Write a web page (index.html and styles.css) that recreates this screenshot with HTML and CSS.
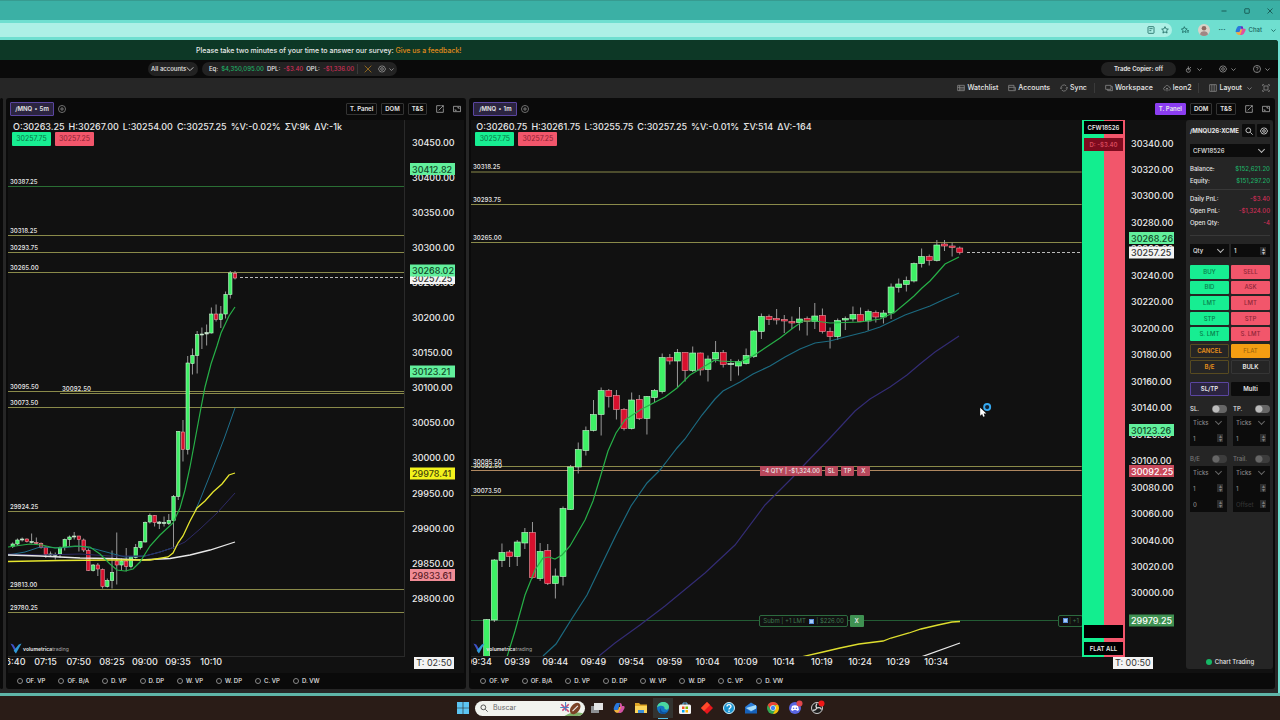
FILE: index.html
```html
<!DOCTYPE html>
<html lang="en">
<head>
    <meta charset="utf-8">
    <title>Volumetrica Trading</title>
    <link rel="stylesheet" href="styles.css">
</head>
<body>
    <!-- Shared icons -->
    <svg class="icon-defs" width="0" height="0" aria-hidden="true">
        <symbol id="i-chevron" viewBox="0 0 12 12"><path d="M1 3.5l5 5 5-5"/></symbol>
        <symbol id="i-gear" viewBox="0 0 12 12"><path d="M6 .8l1.2 1.4 1.9-.3.5 1.8 1.6 1L10.5 6l.7 1.3-1.6 1-.5 1.8-1.9-.3L6 11.2 4.800 9.800l-1.9.3-.5-1.8-1.6-1L1.5 6 .8 4.700l1.6-1 .5-1.8 1.9.3z"/><circle cx="6" cy="6" r="2"/></symbol>
        <symbol id="i-plus" viewBox="0 0 12 12"><circle cx="6" cy="6" r="5.3"/><path d="M6 3v6M3 6h6"/></symbol>
        <symbol id="i-popout" viewBox="0 0 12 12"><path d="M7 1H1v10h10V5M4 8l7-7M8 1h3v3"/></symbol>
        <symbol id="i-frame" viewBox="0 0 12 12"><path d="M.7 2h10.600v8H.7zM6.500 4H9v2M3 6.500V8h2.500"/></symbol>
        <symbol id="i-search" viewBox="0 0 12 12"><circle cx="5" cy="5" r="3.6"/><path d="M8 8l3.5 3.5"/></symbol>
        <symbol id="i-volumetrica" viewBox="0 0 12 12"><path d="M0 .5l3 1 3 5v5z" fill="#3f51c8"/><path d="M12 .5l-3 1-5.500 7L6 11.500z" fill="#2f9ad6"/></symbol>
    </svg>

    <div class="window">
        <div class="titlebar">
            <button aria-label="Minimize"><svg viewBox="0 0 12 12"><path d="M1 6h10"/></svg></button>
            <button aria-label="Maximize"><svg viewBox="0 0 12 12"><rect x="1.5" y="1.5" width="9" height="9" rx="1"/></svg></button>
            <button aria-label="Close"><svg viewBox="0 0 12 12"><path d="M1 1l10 10M11 1L1 11"/></svg></button>
        </div>

        <div class="browser-bar">
            <div class="address">
                <svg class="icon" viewBox="0 0 12 12"><rect x="1.5" y="1" width="9" height="10" rx="1"/><path d="M3.5 4h5M3.5 7h3"/></svg>
                <svg class="icon" viewBox="0 0 12 12"><path d="M6 1l1.5 3.3 3.5.4-2.6 2.4.7 3.5L6 8.900l-3.1 1.7.7-3.5L1 4.700l3.500-.4z"/></svg>
            </div>
            <svg class="icon" viewBox="0 0 12 12"><path d="M5 1l1.300 3 3 .4-2.300 2.200.6 3.200L5 8.300l-2.700 1.500.5-3.200L.6 4.400l3.100-.4zM9 7h3M9 9h3"/></svg>
            <svg class="avatar" viewBox="0 0 12 12"><circle cx="6" cy="6" r="6" fill="#d9d2c8"/><circle cx="6" cy="4.3" r="2.3" fill="#8b6a62"/><path d="M2 10.500c0-4.500 8-4.500 8 0q-4 3-8 0" fill="#a08684"/></svg>
            <span class="dots">···</span>
            <button class="copilot">
                <svg viewBox="0 0 12 12"><path d="M4 1h3l-2 7H1Q0 7 2 3 3 1 4 1" fill="#2878dc"/><path d="M7 1q2 0 2 3h2q1.500 1-.5 4-1 3-3 3H5l2-6z" fill="#e04fa0"/><path d="M1 8h4l1-3h2L6 10q-1 1-2 1Q2 11 1 8" fill="#f5a83c"/><path d="M7 1q2 0 2 3H6z" fill="#5636c9"/></svg>
                Chat
            </button>
            <svg class="icon small" viewBox="0 0 12 12"><use href="#i-chevron"/></svg>
        </div>

        <div class="app">
            <div class="survey">Please take two minutes of your time to answer our survey: <a href="#">Give us a feedback!</a></div>

            <div class="topbar">
                <button class="pill accounts">All accounts <svg class="icon"><use href="#i-chevron"/></svg></button>
                <div class="pill equity">
                    <span>Eq:</span><span class="up">$4,350,095.00</span>
                    <span>DPL:</span><span class="down">-$3.40</span>
                    <span>OPL:</span><span class="down">-$1,336.00</span>
                    <i class="sep"></i>
                    <svg class="icon gold" viewBox="0 0 12 12"><path d="M1 1l10 10M11 1L1 11"/></svg>
                    <svg class="icon"><use href="#i-gear"/></svg>
                    <svg class="icon small"><use href="#i-chevron"/></svg>
                </div>
                <div class="topbar-right">
                    <button class="pill copier">Trade Copier: off</button>
                    <button class="icon-pair" aria-label="Connection"><svg class="icon" viewBox="0 0 12 12"><circle cx="5" cy="8" r="3"/><path d="M5 8V2M7 5l2-2"/></svg><svg class="icon small"><use href="#i-chevron"/></svg></button>
                    <button class="icon-pair" aria-label="Settings"><svg class="icon"><use href="#i-gear"/></svg><svg class="icon small"><use href="#i-chevron"/></svg></button>
                    <button class="icon-pair" aria-label="Help"><svg class="icon" viewBox="0 0 12 12"><circle cx="6" cy="6" r="5.3"/><path d="M4.500 4.700c0-2 3.200-2 3.200 0C7.700 6 6 6 6 7.300M6 8.500v1"/></svg><svg class="icon small"><use href="#i-chevron"/></svg></button>
                </div>
            </div>

            <nav class="toolbar">
                <a href="#"><svg class="icon" viewBox="0 0 12 12"><path d="M1 2h10v8H1zM1 5h10M4 2v8M4 7.500h7"/></svg>Watchlist</a>
                <a href="#"><svg class="icon" viewBox="0 0 12 12"><path d="M1 2h8v3M1 2v8h10V5H1M8 7.500h3"/></svg>Accounts</a>
                <a href="#"><svg class="icon" viewBox="0 0 12 12"><path d="M1.500 7a4.600 4.600 0 0 1 8-4M10.500 5a4.600 4.600 0 0 1-8 4M0 5.500L1.500 7 3 5.500M9 6.500L10.500 5 12 6.500"/></svg>Sync</a>
                <i class="sep"></i>
                <a href="#"><svg class="icon" viewBox="0 0 12 12"><path d="M1 2h8v6H1zM9 4h2.500v6H4V8"/></svg>Workspace</a>
                <a href="#"><svg class="icon" viewBox="0 0 12 12"><path d="M4 9H2.500C0 8.500.5 5 3 5c.5-4 6-3.500 6.200 0 3 .2 2.800 4 0 4H8M6 11V6M4.500 7.500L6 6l1.500 1.500"/></svg>leon2</a>
                <i class="sep"></i>
                <a href="#"><svg class="icon" viewBox="0 0 12 12"><path d="M1 1h10v10H1zM4.300 1v10M7.700 1v10"/></svg>Layout<svg class="icon small"><use href="#i-chevron"/></svg></a>
                <a href="#" aria-label="Fullscreen"><svg class="icon" viewBox="0 0 12 12"><path d="M3 3h6v6H3zM1 3V1h2M9 1h2v2M11 9v2H9M3 11H1V9"/></svg></a>
            </nav>

            <main class="panels">
                <div class="panel-sliver"></div>

                <section class="panel">
                    <header class="panel-head">
                        <button class="tab">/MNQ <b>•</b> 5m</button>
                        <button class="bare" aria-label="Add chart"><svg class="icon"><use href="#i-plus"/></svg></button>
                        <div class="panel-tools">
                            <button>T. Panel</button><button>DOM</button><button>T&amp;S</button>
                            <svg class="icon"><use href="#i-popout"/></svg>
                            <svg class="icon"><use href="#i-frame"/></svg>
                        </div>
                    </header>
                    <div class="panel-body">
                        <div class="chart">
                            <div class="plot" id="plot-5m">
                                <div class="ohlc"><span>O:30263.25</span><span>H:30267.00</span><span>L:30254.00</span><span>C:30257.25</span><span>%V:-0.02%</span><span>ΣV:9k</span><span>ΔV:-1k</span></div>
                                <div class="quotes"><button class="bid">30257.75</button><button class="ask">30257.25</button></div>
                                <div class="brand"><svg><use href="#i-volumetrica"/></svg><span><b>volumetrica</b>trading</span></div>
                            </div>
                            <div class="price-axis" id="price-5m"></div>
                            <div class="time-axis" id="time-5m"></div>
                            <div class="countdown"><span>T: 02:50</span></div>
                        </div>
                    </div>
                    <footer class="studies">
                        <label><input type="radio">OF. VP</label>
                        <label><input type="radio">OF. B/A</label>
                        <label><input type="radio">D. VP</label>
                        <label><input type="radio">D. DP</label>
                        <label><input type="radio">W. VP</label>
                        <label><input type="radio">W. DP</label>
                        <label><input type="radio">C. VP</label>
                        <label><input type="radio">D. VW</label>
                    </footer>
                </section>

                <section class="panel">
                    <header class="panel-head">
                        <button class="tab">/MNQ <b>•</b> 1m</button>
                        <button class="bare" aria-label="Add chart"><svg class="icon"><use href="#i-plus"/></svg></button>
                        <div class="panel-tools">
                            <button class="on">T. Panel</button><button>DOM</button><button>T&amp;S</button>
                            <svg class="icon"><use href="#i-popout"/></svg>
                            <svg class="icon"><use href="#i-frame"/></svg>
                        </div>
                    </header>
                    <div class="panel-body">
                        <div class="chart with-account">
                            <div class="plot" id="plot-1m">
                                <div class="ohlc"><span>O:30260.75</span><span>H:30261.75</span><span>L:30255.75</span><span>C:30257.25</span><span>%V:-0.01%</span><span>ΣV:514</span><span>ΔV:-164</span></div>
                                <div class="quotes"><button class="bid">30257.75</button><button class="ask">30257.25</button></div>
                                <div class="brand"><svg><use href="#i-volumetrica"/></svg><span><b>volumetrica</b>trading</span></div>
                                <div class="position">
                                    <span>-4 QTY | -$1,324.00</span><button>SL</button><button>TP</button><button>X</button>
                                </div>
                                <div class="order">
                                    <span>Subm | +1 LMT <i></i> | $226.00</span><button>X</button>
                                </div>
                                <div class="order-edge"><i></i> | +1</div>
                                <svg class="cursor" viewBox="0 0 12 12"><circle cx="7" cy="3.5" r="2.600" fill="#123" stroke="#36a9f0" stroke-width="1.6"/><path d="M1 4v7l1.700-1.500.9 2.300 1.300-.5L4 9h2.300z" fill="#fff"/></svg>
                            </div>
                            <div class="account-bar">
                                <span class="acct">CFW18526</span>
                                <span class="acct loss">D: -$3.40</span>
                                <span class="acct blank"></span>
                                <button class="acct">FLAT ALL</button>
                            </div>
                            <div class="price-axis" id="price-1m"></div>
                            <div class="time-axis" id="time-1m"></div>
                            <div class="countdown"><span>T: 00:50</span></div>
                        </div>

                        <aside class="ticket">
                            <div class="ticket-title">
                                <strong>/MNQU26:XCME</strong>
                                <button aria-label="Search"><svg class="icon"><use href="#i-search"/></svg></button>
                                <button aria-label="Settings"><svg class="icon"><use href="#i-gear"/></svg></button>
                            </div>
                            <div class="select"><select aria-label="Account"><option>CFW18526</option></select></div>
                            <dl class="totals">
                                <div><dt>Balance:</dt><dd class="up">$152,621.20</dd></div>
                                <div><dt>Equity:</dt><dd class="up">$151,297.20</dd></div>
                            </dl>
                            <dl class="totals">
                                <div><dt>Daily PnL:</dt><dd class="down">-$3.40</dd></div>
                                <div><dt>Open PnL:</dt><dd class="down">-$1,324.00</dd></div>
                                <div><dt>Open Qty:</dt><dd class="down">-4</dd></div>
                            </dl>
                            <div class="pair qty">
                                <div class="select"><select aria-label="Size type"><option>Qty</option></select></div>
                                <div class="stepper"><input type="text" aria-label="Quantity" value="1"></div>
                            </div>
                            <div class="pair orders">
                                <button class="buy">BUY</button><button class="sell">SELL</button>
                                <button class="buy">BID</button><button class="sell">ASK</button>
                                <button class="buy">LMT</button><button class="sell">LMT</button>
                                <button class="buy">STP</button><button class="sell">STP</button>
                                <button class="buy">S. LMT</button><button class="sell">S. LMT</button>
                            </div>
                            <div class="pair manage">
                                <button class="outline">CANCEL</button><button class="flat">FLAT</button>
                                <button class="outline">B/E</button><button>BULK</button>
                            </div>
                            <div class="pair modes">
                                <button class="on">SL/TP</button><button>Multi</button>
                            </div>
                            <div class="pair brackets">
                                <div class="bracket">
                                    <label>SL. <input type="checkbox"></label>
                                    <div class="fields">
                                        <div class="select"><select aria-label="SL unit"><option>Ticks</option></select></div>
                                        <div class="stepper"><input type="text" aria-label="SL ticks" value="1"></div>
                                    </div>
                                </div>
                                <div class="bracket">
                                    <label>TP. <input type="checkbox"></label>
                                    <div class="fields">
                                        <div class="select"><select aria-label="TP unit"><option>Ticks</option></select></div>
                                        <div class="stepper"><input type="text" aria-label="TP ticks" value="1"></div>
                                    </div>
                                </div>
                                <div class="bracket off">
                                    <label>B/E <input type="checkbox"></label>
                                    <div class="fields">
                                        <div class="select"><select aria-label="B/E unit"><option>Ticks</option></select></div>
                                        <div class="stepper"><input type="text" aria-label="B/E ticks" value="1"></div>
                                        <div class="stepper"><input type="text" aria-label="B/E offset" value="0"></div>
                                    </div>
                                </div>
                                <div class="bracket off">
                                    <label>Trail. <input type="checkbox"></label>
                                    <div class="fields">
                                        <div class="select"><select aria-label="Trail unit"><option>Ticks</option></select></div>
                                        <div class="stepper"><input type="text" aria-label="Trail ticks" value="1"></div>
                                        <div class="stepper"><input type="text" aria-label="Trail offset" placeholder="Offset"></div>
                                    </div>
                                </div>
                            </div>
                            <div class="status"><i></i>Chart Trading</div>
                        </aside>
                    </div>
                    <footer class="studies">
                        <label><input type="radio">OF. VP</label>
                        <label><input type="radio">OF. B/A</label>
                        <label><input type="radio">D. VP</label>
                        <label><input type="radio">D. DP</label>
                        <label><input type="radio">W. VP</label>
                        <label><input type="radio">W. DP</label>
                        <label><input type="radio">C. VP</label>
                        <label><input type="radio">D. VW</label>
                    </footer>
                </section>
            </main>
        </div>
    </div>

    <div class="taskbar">
        <svg viewBox="0 0 12 12"><path d="M0 0h5.700v5.700H0zM6.300 0H12v5.700H6.300zM0 6.300h5.700V12H0zM6.300 6.300H12V12H6.300z" fill="#5cc4f2"/></svg>
        <label class="search">
            <svg class="icon"><use href="#i-search"/></svg>
            <input type="text" placeholder="Buscar">
            <svg class="doodle" viewBox="0 0 24 14"><path d="M5 14q8-6 19-2v2z" fill="#7fb069"/><path d="M2 3l7 7M9 3L3 9" stroke="#c44a78" stroke-width="1.5"/><path d="M6 1v8M1 6h8" stroke="#4a80c8"/><ellipse cx="15" cy="7" rx="6" ry="4" transform="rotate(-50 15 7)" fill="#7b4326"/><path d="M12.500 9.500l5-5" stroke="#eee"/></svg>
        </label>
        <svg viewBox="0 0 12 12"><rect y="4" width="8" height="7" fill="#8d8f92"/><rect x="3" y="1" width="9" height="7" fill="#e4e4e4"/></svg>
        <svg viewBox="0 0 12 12"><path d="M4 1h3l-2 7H1Q0 7 2 3 3 1 4 1" fill="#2878dc"/><path d="M7 1q2 0 2 3h2q1.500 1-.5 4-1 3-3 3H5l2-6z" fill="#d453a4"/><path d="M1 8h4l1-3h2L6 10q-1 1-2 1Q2 11 1 8" fill="#f0b040"/></svg>
        <svg viewBox="0 0 12 12"><path d="M0 1h4l1.500 1.500H12V11H0z" fill="#e0a526"/><path d="M0 4h12v7H0z" fill="#fbd45c"/><path d="M3 8h6v3H3z" fill="#3c8fd8"/></svg>
        <svg class="active" viewBox="0 0 12 12"><circle cx="6" cy="6" r="6" fill="#1474c4"/><path d="M0 5.500C1-2 12-1.500 12 5c0 3-4 3.500-4.500 1.500C8 4 3 2.500 0 5.500" fill="#4ad6a0"/><path d="M4 6c-1 3 3 6 7 3-1 2-3 3-5 3C2 12 2 7 4 6" fill="#0d4f9c"/></svg>
        <svg viewBox="0 0 12 12"><path d="M4 3V1h4v2" fill="none" stroke="#5ab4ea"/><rect y="2.5" width="12" height="9.5" rx="1.5" fill="#f4f4f4"/><path d="M3 4.500h2.500V7H3z" fill="#f25022"/><path d="M6.500 4.500H9V7H6.500z" fill="#7fba00"/><path d="M3 8h2.500v2.500H3z" fill="#00a4ef"/><path d="M6.500 8H9v2.500H6.500z" fill="#ffb900"/></svg>
        <svg viewBox="0 0 12 12"><path d="M6 0l6 6-6 6-6-6z" fill="#e8161c"/><path d="M6 0l3 3-6 6-3-3z" fill="#ff4a2a"/></svg>
        <svg viewBox="0 0 12 12"><circle cx="6" cy="6" r="5.5" fill="#1a93d0" stroke="#cfeefc"/><path d="M4 4.500c0-2.500 4-2.500 4 0C8 6 6 6 6 7.500M6 8.500V10" fill="none" stroke="#fff" stroke-width="1.3"/></svg>
        <svg viewBox="0 0 12 12"><path d="M0 5l6-4.500L12 4v7H1z" fill="#2b7cd8"/><path d="M1 6l10-3v4l-5 2z" fill="#a8dcf8"/><path d="M0 6l6 4 6-4v5.500H0z" fill="#1760b8"/></svg>
        <svg viewBox="0 0 12 12"><circle cx="6" cy="6" r="6" fill="#34a853"/><path d="M.8 3A6 6 0 0 1 11.200 3H6L3.500 7.500z" fill="#ea4335"/><path d="M11.200 3A6 6 0 0 1 6 12l2.500-4.500L8.500 3z" fill="#fbbc05"/><circle cx="6" cy="6" r="2.8" fill="#fff"/><circle cx="6" cy="6" r="2.2" fill="#4285f4"/></svg>
        <svg class="running" viewBox="0 0 12 12"><circle cx="6" cy="6" r="6" fill="#5965e0"/><path d="M3 4q3-1.500 6 0l1 4-2 1-.7-1H4.700L4 9 2 8z" fill="#fff"/><circle cx="4.6" cy="6.3" r=".8" fill="#5965e0"/><circle cx="7.4" cy="6.3" r=".8" fill="#5965e0"/><circle cx="10.5" cy="1.5" r="3" fill="#e0474c"/></svg>
        <svg class="running" viewBox="0 0 12 12"><circle cx="6" cy="6" r="5.5" fill="#1e1e1e" stroke="#ccc"/><path d="M6 1.500q-2 3 0 4.500M6 6q3.500-1 4.500 1.500M6 6q-2 3-4.300 2" fill="none" stroke="#ddd" stroke-width="1.3"/><circle cx="10.5" cy="1.5" r="3" fill="#f01818"/></svg>
    </div>

    <script src="charts.js"></script>
</body>
</html>
```

FILE: styles.css
```css
* {
    box-sizing: border-box;
}

body {
    margin: 0;
    min-height: 100vh;
    display: flex;
    flex-direction: column;
    background-color: #2a1c17;
    color: #e8e8e8;
    font-family: Inter, "Liberation Sans", sans-serif;
    font-size: 7px;
    font-weight: 600;
    line-height: 8px;
}

button, input, select {
    font: inherit;
    color: inherit;
    background: none;
    border: 0;
    padding: 0;
    margin: 0;
    border-radius: 1px;
    white-space: nowrap;
}

a {
    color: inherit;
    text-decoration: none;
}

.icon-defs {
    position: absolute;
}

.icon {
    width: 8px;
    height: 8px;
    flex: none;
    fill: none;
    stroke: currentColor;
    stroke-width: 1.2;
}

.icon.small {
    width: 5px;
    height: 5px;
    stroke-width: 2;
}

.up {
    color: #1fae66;
}

.down {
    color: #d02e57;
}

.sep {
    width: 1px;
    height: 10px;
    background-color: #3a3a3a;
}

/* Browser window */
.window {
    flex: 1;
    display: flex;
    flex-direction: column;
    background-color: #6fdfd0;
    padding-right: 2px;
    border-bottom: 3px solid #5fb5a8;
}

.titlebar {
    height: 20px;
    margin-right: -2px;
    background-color: #3bb0a5;
    border-top: 1px solid #379b90;
    display: flex;
    justify-content: flex-end;
    align-items: center;
    gap: 17px;
    padding-right: 7px;
}

.titlebar button {
    height: 6px;
    display: flex;
}

.titlebar svg {
    width: 6px;
    height: 6px;
    fill: none;
    stroke: #134a45;
    stroke-width: 1.6;
}

.browser-bar {
    height: 20px;
    display: flex;
    align-items: center;
    gap: 9px;
    padding-right: 2px;
    color: #17635c;
    font-size: 6px;
    font-weight: 500;
}

.address {
    flex: 1;
    height: 14px;
    background-color: #adf0e6;
    border-radius: 0 7px 7px 0;
    display: flex;
    justify-content: flex-end;
    align-items: center;
    gap: 6px;
    padding-right: 3px;
}

.avatar {
    width: 12px;
    height: 12px;
}

.dots {
    font-size: 7px;
    font-weight: 700;
}

.copilot {
    display: flex;
    align-items: center;
    gap: 3px;
}

.copilot svg {
    width: 11px;
    height: 11px;
}

/* Trading app */
.app {
    flex: 1;
    display: flex;
    flex-direction: column;
    background-color: #262626;
    border-radius: 0 3px 0 0;
    overflow: hidden;
}

.survey {
    height: 20px;
    line-height: 21px;
    background-color: #0d3826;
    padding-left: 196px;
    font-weight: 500;
    white-space: nowrap;
}

.survey a {
    color: #e08a1c;
}

.topbar {
    height: 18px;
    background-color: #0a0a0a;
    display: flex;
    align-items: center;
    gap: 4px;
    padding-left: 148px;
    font-size: 6px;
}

.pill {
    height: 14px;
    border-radius: 7px;
    background-color: #222;
    display: flex;
    align-items: center;
    white-space: nowrap;
}

.accounts {
    width: 50px;
    padding: 0 4px 0 3px;
    justify-content: space-between;
    font-weight: 500;
}

.equity {
    width: 195px;
    padding-left: 7px;
    gap: 3px;
    font-weight: 500;
}

.equity .icon {
    color: #999;
    margin-left: 3px;
}

.equity .gold {
    color: #a8791e;
}

.equity .small {
    margin-left: 0;
}

.topbar-right {
    margin-left: auto;
    display: flex;
    align-items: center;
    gap: 17px;
    padding-right: 8px;
    color: #999;
}

.copier {
    width: 75px;
    justify-content: center;
    color: #e8e8e8;
    margin-right: -8px;
}

.icon-pair {
    display: flex;
    align-items: center;
    gap: 4px;
}

.toolbar {
    height: 20px;
    display: flex;
    justify-content: flex-end;
    align-items: center;
    padding-right: 8px;
    gap: 7px;
    font-weight: 500;
}

.toolbar a {
    display: flex;
    align-items: center;
    gap: 2px;
    margin-left: 3px;
}

.toolbar .icon {
    color: #888;
}

.toolbar .small {
    margin-left: 3px;
}

/* Chart panels */
.panels {
    flex: 1;
    display: grid;
    grid-template-columns: 3px 4fr 7fr;
    gap: 3px;
    padding: 0 3px 4px 0;
}

.panel, .panel-sliver {
    background-color: #0a0a0a;
    border-radius: 3px;
}

.panel {
    display: flex;
    flex-direction: column;
    padding: 0 2px;
    min-width: 0;
}

.panel-head {
    height: 22px;
    display: flex;
    align-items: center;
    gap: 4px;
    padding: 0 3px 0 2px;
    font-size: 6px;
}

.tab {
    width: 44px;
    height: 14px;
    background-color: #2b2440;
    border: 1px solid #5a45a0;
}

.tab b {
    margin: 0 1px;
}

.bare, .bare svg {
    display: block;
    color: #888;
}

.panel-tools {
    margin-left: auto;
    display: flex;
    align-items: center;
    gap: 4px;
}

.panel-tools button {
    height: 12px;
    padding: 0 3px;
    border: 1px solid #333;
}

.panel-tools .on {
    background-color: #8b3df0;
    border-color: #8b3df0;
}

.panel-tools .icon {
    margin-left: 5px;
    color: #aaa;
}

.panel-body {
    flex: 1;
    display: flex;
    background-color: #111;
}

.chart {
    flex: 1;
    min-width: 0;
    display: grid;
    grid-template-columns: 1fr 59px;
    grid-template-rows: 1fr 16px;
}

.chart.with-account {
    grid-template-columns: 1fr 43px 61px;
}

.plot {
    position: relative;
    min-width: 0;
    overflow: hidden;
    border-right: 1px solid #2a2a2a;
    border-bottom: 1px solid #2a2a2a;
}

.with-account .plot {
    border-right: 0;
}

.drawing {
    position: absolute;
    inset: 0;
    width: 100%;
    height: 100%;
}

.drawing text {
    font-size: 6px;
    fill: #ddd;
}

.drawing .axis-label {
    font-size: 9px;
    font-weight: 500;
    fill: #ececec;
}

.price-axis, .time-axis {
    position: relative;
    overflow: hidden;
}

.with-account .time-axis {
    grid-column: 1 / 2;
}

.countdown {
    display: flex;
    align-items: flex-start;
    padding-left: 9px;
    font-size: 9px;
    font-weight: 400;
}

.with-account .countdown {
    grid-column: 2 / 4;
    padding-left: 31px;
}

.countdown span {
    background-color: #f4f4f4;
    color: #333;
    line-height: 12px;
    padding: 0 2px;
    white-space: nowrap;
}

.ohlc {
    position: relative;
    z-index: 1;
    display: flex;
    gap: 4px;
    padding: 2px 0 0 5px;
    font-size: 9px;
    font-weight: 500;
    line-height: 10px;
    white-space: nowrap;
}

.quotes {
    position: relative;
    z-index: 1;
    display: flex;
    gap: 4px;
    padding-left: 4px;
}

.quotes button {
    width: 39px;
    height: 14px;
    font-size: 7px;
    font-weight: 400;
}

.bid {
    background-color: #17ee92;
    color: #087544;
}

.ask {
    background-color: #f2566b;
    color: #8c2334;
}

.brand {
    position: absolute;
    left: 2px;
    bottom: 2px;
    z-index: 1;
    display: flex;
    align-items: center;
    gap: 1px;
    font-size: 5px;
    font-weight: 400;
    color: #aaa;
}

.brand svg {
    width: 12px;
    height: 11px;
}

.brand b {
    color: #ddd;
}

/* Position and working orders, pinned to their price on the chart */
.position, .order, .order-edge {
    position: absolute;
    z-index: 1;
    display: flex;
    font-size: 6px;
    line-height: 10px;
    white-space: nowrap;
}

.position {
    left: 289px;
    top: 346px;
    gap: 3px;
    font-weight: 500;
}

.position span {
    background-color: #b8485c;
    padding: 0 2px;
}

.position button {
    width: 13px;
    background-color: #b8485c;
}

.order {
    left: 288px;
    top: 495px;
    gap: 2px;
}

.order span, .order-edge {
    background-color: #111;
    border: 1px solid #2d6b3f;
    border-radius: 2px;
    color: #3f7a50;
    font-weight: 400;
    padding: 0 3px;
}

.order button {
    background-color: #3f9152;
    width: 14px;
}

.order-edge {
    right: -1px;
    top: 495px;
}

.order i, .order-edge i {
    display: inline-block;
    width: 5px;
    height: 5px;
    background-color: #a8cdf8;
    border: 1px solid #5a8fe0;
    vertical-align: middle;
    margin: 2px 1px;
}

.cursor {
    position: absolute;
    left: 508px;
    top: 283px;
    width: 14px;
    height: 14px;
}

.account-bar {
    display: flex;
    flex-direction: column;
    gap: 4px;
    padding: 1px 2px 2px;
    background: linear-gradient(to right, #12ee8f 50%, #f2566b 50%);
}

.acct {
    height: 13px;
    line-height: 13px;
    background-color: #000;
    text-align: center;
    font-size: 6px;
    border-radius: 0;
}

.loss {
    background-color: #7e0b1e;
    color: #d8485c;
}

.blank {
    margin-top: auto;
}

.studies {
    height: 16px;
    display: flex;
    align-items: center;
    gap: 13px;
    padding-left: 9px;
    font-size: 6px;
    font-weight: 500;
}

.studies label {
    display: flex;
    align-items: center;
    gap: 3px;
    white-space: nowrap;
}

.studies input {
    appearance: none;
    width: 6px;
    height: 6px;
    border: 1px solid #888;
    border-radius: 50%;
}

/* Order ticket */
.ticket {
    width: 87px;
    display: flex;
    flex-direction: column;
    background-color: #252525;
    border-radius: 3px;
    padding: 4px 3px 3px 4px;
    font-size: 6px;
    font-weight: 500;
    margin-bottom: 4px;
}

.ticket-title {
    display: flex;
    align-items: center;
    gap: 2px;
    height: 13px;
}

.ticket-title strong {
    flex: 1;
    font-weight: 700;
    white-space: nowrap;
}

.ticket-title button {
    width: 13px;
    height: 13px;
    background-color: #0c0c0c;
    display: flex;
    align-items: center;
    justify-content: center;
}

.select, .stepper {
    position: relative;
    height: 13px;
    background-color: #0c0c0c;
}

.ticket > .select {
    margin-top: 7px;
}

.select select, .stepper input {
    appearance: none;
    display: block;
    width: 100%;
    height: 100%;
    padding: 0 3px;
}

.select::after {
    content: "";
    position: absolute;
    right: 6px;
    top: 3px;
    width: 4px;
    height: 4px;
    border-right: 1px solid #bbb;
    border-bottom: 1px solid #bbb;
    transform: rotate(45deg);
}

.stepper::after {
    content: "▴\A▾";
    white-space: pre;
    position: absolute;
    right: 4px;
    top: 3px;
    width: 6px;
    height: 8px;
    line-height: 4px;
    text-align: center;
    background-color: #2c2c2c;
    color: #bbb;
}

.totals {
    margin: 0;
    padding: 6px 0 2px;
    border-bottom: 1px solid #383838;
}

.totals div {
    display: flex;
    justify-content: space-between;
    line-height: 12px;
}

.totals + .totals {
    padding: 3px 0 6px;
}

.totals dd {
    margin: 0;
}

.pair {
    display: grid;
    grid-template-columns: 1fr 1fr;
    gap: 2px;
}

.qty {
    margin-top: 8px;
}

.orders {
    margin-top: 8px;
    height: 76px;
}

.buy {
    background-color: #17ee92;
    color: #0a7d4a;
}

.sell {
    background-color: #f2566b;
    color: #8f2638;
}

.manage {
    margin-top: 3px;
    grid-auto-rows: 14px;
}

.manage button, .modes button {
    border: 1px solid #353535;
    font-weight: 600;
}

.manage .outline {
    border-color: #574a20;
    color: #e8901a;
}

.manage .flat {
    background-color: #f59e12;
    border-color: #f59e12;
    color: #96600c;
    font-weight: 400;
}

.modes {
    margin-top: 8px;
    grid-auto-rows: 14px;
}

.modes button {
    background-color: #0c0c0c;
    border-color: #0c0c0c;
}

.modes .on {
    background-color: #2b2440;
    border-color: #5a45a0;
}

.brackets {
    margin-top: 7px;
    column-gap: 6px;
    row-gap: 7px;
}

.bracket label {
    height: 11px;
    display: flex;
    align-items: center;
    justify-content: space-between;
    white-space: nowrap;
}

.bracket input[type="checkbox"] {
    appearance: none;
    width: 15px;
    height: 8px;
    border-radius: 4px;
    background: radial-gradient(circle at 4px 4px, #bbb 3px, #666 4px);
}

.bracket.off label {
    color: #777;
}

.bracket.off input[type="checkbox"] {
    background: radial-gradient(circle at 4px 4px, #666 3px, #3c3c3c 4px);
}

.fields {
    margin-top: 2px;
    background-color: #0c0c0c;
    color: #888;
}

.fields .stepper {
    height: 16px;
}

.fields .stepper::after {
    top: 4px;
    color: #777;
}

.fields .select {
    height: 14px;
}

.fields .select::after {
    border-color: #666;
}

.fields ::placeholder {
    color: #333;
}

.status {
    margin-top: auto;
    display: flex;
    align-items: center;
    justify-content: center;
    gap: 3px;
}

.status i {
    width: 6px;
    height: 6px;
    border-radius: 50%;
    background-color: #16b866;
}

/* Windows taskbar */
.taskbar {
    height: 24px;
    display: flex;
    justify-content: center;
    align-items: center;
    gap: 10px;
}

.taskbar > svg {
    width: 12px;
    height: 12px;
    overflow: visible;
}

.taskbar .active {
    outline: 4px solid #333330;
    background-color: #333330;
    box-shadow: 0 6px 0 -1px #55c0e8;
}

.search {
    width: 110px;
    height: 15px;
    border-radius: 8px;
    background-color: #f1f3ee;
    color: #333;
    display: flex;
    align-items: center;
    gap: 5px;
    padding-left: 5px;
    margin: 0 -4px;
    overflow: hidden;
    font-weight: 400;
}

.search input {
    flex: 1;
    width: 0;
}

.search ::placeholder {
    color: #666;
}

.doodle {
    width: 26px;
    height: 15px;
    fill: none;
}
```

FILE: charts.js
```js
const GREEN = "#3df065";
const RED = "#d8102e";
const OLIVE = "#8a8a4a";

// Candles are [body top, body bottom, high, low, kind]; kind is g, r or d (doji)
const chart5m = {
    id: "5m", x: 8, y: 120, first: 12.7, step: 4.73, width: 3.4,
    candles: [
        [544,546.5,542.5,548,"g"],[540,544,538.5,545.5,"g"],[539,540,537.5,541.5,"d"],[539,541.5,538.5,542.5,"r"],
        [541.5,542.5,533.5,543.5,"d"],[542.5,543.5,537.5,544.5,"r"],[543.5,547.5,542.5,548.5,"r"],[547,554.5,546.5,558,"r"],
        [554,555,551.5,556.5,"d"],[554.5,555.5,552.5,559.5,"d"],[547.5,554,546.5,558,"g"],[539.5,547.5,538.5,550.5,"g"],
        [537,539.5,535.5,546,"g"],[536,537,532,539.5,"d"],[536,539.5,536,551.5,"r"],[540,550,538.5,552,"r"],
        [550.5,570.5,548.5,571,"r"],[565,570.5,564,571.5,"g"],[565,569,563,576,"r"],[569.5,586.5,568.5,588.5,"r"],
        [580.5,586.5,578.5,587.5,"g"],[572.5,580.5,550.5,588.5,"g"],[561,565,532.5,584.5,"r"],[561,565,558.5,570,"g"],
        [561,566.5,548,571.5,"r"],[557,566.5,556,568.5,"g"],[547.5,557.5,544,558.5,"g"],[541.5,547.5,541,549.5,"g"],
        [522.5,542,521.5,542.5,"g"],[515.5,522,513.5,523.5,"g"],[515.5,522.5,515,526.5,"r"],[522,523.5,521,529,"d"],
        [522.5,523.5,516.5,526.5,"d"],[520.5,523.5,514,525,"g"],[496.5,520.5,495,548.5,"g"],[431.5,496.5,431,500,"g"],
        [432,449.5,420,461.5,"r"],[363,449.5,356,454.5,"g"],[355.5,363.5,348.5,374.5,"g"],[334.5,355.5,331,373.5,"g"],
        [334,335,327.5,349,"d"],[332.5,334,324.5,345.5,"d"],[314,333,307.5,333.5,"g"],[314,319.5,304.5,321.5,"r"],
        [314,319.5,306,328,"g"],[294.5,314,291.5,318.5,"g"],[273,294.5,271,298.5,"g"],[273.5,278,271,279.5,"r"]
    ],
    averages: [
        ["#1f6f8c", 1, "8,555 25,552 40,547 60,548 80,546 95,549 110,553 125,557 145,556 160,552 172,548"],
        ["#1f6f8c", 1, "195,511 200,500 212,470 224,439 235,408"],
        ["#2e2a66", 1, "8,554 40,555 80,554 110,556 145,556 160,552 172,548 185,542 200,529 217,513 235,493"],
        ["#e8e8e8", 1.3, "8,555 40,556 80,558 110,558.5 140,560 170,558.5 190,555 210,550 235,542"],
        ["#e6e62e", 1.3, "8,561.5 60,560.5 110,560 150,560 168,557 173,553 178,543 183,536 190,521 197,508 205,501 213,492 222,484 229,475 235,473"],
        ["#27b048", 1.2, "8,547 30,544 42,545 55,548 75,546 90,547 100,554 110,564 117,570 125,571 133,569 140,562 150,546 160,535 173,523 180,508 185,490 190,467 195,440 200,413 205,387 211,364 217,346 221,333 229,316 235,307"]
    ],
    levels: [
        ["30387.25", 186.5, "#2a6e34"], ["30318.25", 235.5], ["30293.75", 252.5], ["30265.00", 272.5], ["30095.50", 391.5],
        ["30092.50", 393.5, OLIVE, 52], ["30073.50", 407.5], ["29924.25", 511.5], ["29813.00", 589.5], ["29780.25", 612.5]
    ],
    last: [277.5, 232],
    axisX: 4, axisTop: 142.5, axisStep: 35.05, priceTop: 30450, priceStep: 50, axisCount: 14,
    tags: [
        ["30257.25", 278, "#f4f4f4", "#333"], ["30412.82", 169, "#62f09c", "#124a2a"], ["30268.02", 270.5, "#62f09c", "#124a2a"],
        ["30123.21", 371.5, "#62f09c", "#124a2a"], ["29978.41", 473.5, "#f2f21c", "#44440c"], ["29833.61", 575, "#f08c96", "#5a1c26"]
    ],
    times: ["06:40", "07:15", "07:50", "08:25", "09:00", "09:35", "10:10"], timeX: 4.5, timeStep: 33.1
};
chart5m.axisX = 7;

const chart1m = {
    id: "1m", x: 471, y: 120, first: 486.7, step: 7.63, width: 6,
    candles: [
        [619.5,660,619,660,"g"],[560,620,559,622,"g"],[552.5,560.5,543.5,567,"g"],[552,556.5,550,567,"r"],
        [542,556.5,540,566,"g"],[532.5,543,528,549,"g"],[532.5,577.5,522,578.5,"r"],[551.5,578.5,543,581,"g"],
        [550.5,583.5,544,585,"r"],[576,583.5,568.5,598.5,"g"],[508.5,576.5,506.5,585.5,"g"],[467,509.5,465,510,"g"],
        [449.5,467,442.5,473.5,"g"],[430.5,450.5,426.5,455.5,"g"],[414.5,430.5,400,431.5,"g"],[390.5,414.5,387.5,435.5,"g"],
        [390.5,396.5,389,407.5,"r"],[395.5,409.5,390,419.5,"r"],[409.5,428.5,408,430.5,"r"],[400,428.5,392.5,429.5,"g"],
        [399.5,418.5,395,420,"r"],[396.5,418.5,396,434.5,"g"],[390.5,397.5,389,402.5,"g"],[357.5,391.5,353.5,393.5,"g"],
        [357.5,361,354,364.5,"r"],[352.5,361,349,387.5,"g"],[352.5,370.5,352.5,381.5,"r"],[353,370.5,346.5,372,"g"],
        [353,370,352.5,375.5,"r"],[359,369.5,355.5,381.5,"g"],[352.5,359,341,362.5,"g"],[352.5,364.5,350,367.5,"r"],
        [363.5,364.5,359,381,"d"],[361.5,366,359.5,375.5,"g"],[355.5,363.5,348.5,364.5,"g"],[331,356.5,330,358,"g"],
        [316.5,331.5,313.5,339,"g"],[316.5,319.5,314.5,325,"r"],[318.5,320,309,324.5,"r"],[319.5,321,315,333,"r"],
        [321.5,323,316.5,329,"r"],[319,322.5,307,330.5,"g"],[318.5,321.5,316.5,335.5,"r"],[316,321.5,303,329,"g"],
        [315.5,331.5,308.5,333.5,"r"],[331.5,336.5,327.5,348.5,"r"],[320.5,336.5,318.5,340,"g"],[318.5,320,316.5,330,"g"],
        [314.5,319,306.5,321.5,"g"],[314.5,321.5,307.5,322,"r"],[311.5,321,309.5,330.5,"g"],[312.5,317,310.5,322.5,"r"],
        [313,317,310,323.5,"g"],[287,313,283.5,319,"g"],[284,287.5,278.5,292.5,"g"],[280.5,284.5,276.5,291.5,"g"],
        [263.5,281,262.5,282.5,"g"],[256.5,263.5,248.5,267.5,"g"],[256.5,260.5,254.5,265.5,"r"],[245,260.5,240,261.5,"g"],
        [244,246,240,251,"r"],[246,247.5,242.5,256.5,"r"],[248,252.5,246.5,254.5,"r"]
    ],
    averages: [
        ["#332c74", 1.2, "599,656 615,643 640,625 665,606 705,573 735,545 765,505 792,478 805,464 830,438 855,411 870,399 890,387 907,375 920,364 935,352 947,344 959,336"],
        ["#1c6a80", 1.2, "543,656 556,644 571,620 587,595 600,568 616,535 631,506 647,483 660,470 670,457 677,448 685,439 692,429 702,415 715,399 723,391 740,382 753,374 770,366 785,357 800,349 815,343 830,341 845,337 865,332 880,327 905,315 930,306 945,299 959,293"],
        ["#27b048", 1.2, "507,657 515,631 525,595 535,570 543,558 549,557 555,559 562,555 570,546 585,520 593,501 600,478 608,451 616,433 625,420 640,410 665,397 677,388 690,375 700,369 715,360 720,361 740,362 753,356 765,348 780,338 793,328 803,321 815,321 830,323 860,322 880,319 895,312 907,302 914,296 922,288 930,281 938,272 945,264 959,257"],
        ["#dede2e", 1.3, "801,657 823,652 840,648 859,644 883,641 891,638 909,633 921,629 938,625 952,622 960,621.5"],
        ["#e8e8e8", 1.3, "921,657 960,643"]
    ],
    levels: [
        ["30318.25", 172], ["30293.75", 204.5], ["30265.00", 242.5], ["30095.50", 466.5], ["30092.50", 470.5, "#b08860"],
        ["30073.50", 495.5], ["", 620.5, "#235c34"]
    ],
    last: [252.5, 496],
    axisX: 6, axisTop: 143, axisStep: 26.47, priceTop: 30340, priceStep: 20, axisCount: 18,
    tags: [
        ["30268.26", 238, "#62f09c", "#124a2a"], ["30257.25", 252.5, "#f4f4f4", "#333"], ["30123.26", 430, "#62f09c", "#124a2a"],
        ["30092.25", 471, "#c84a5c", "#fff"], ["29979.25", 620.5, "#3f9152", "#fff"]
    ],
    times: ["09:34", "09:39", "09:44", "09:49", "09:54", "09:59", "10:04", "10:09", "10:14", "10:19", "10:24", "10:29", "10:34"],
    timeX: 8, timeStep: 38.1
};

function svg(inner) {
    return '<svg class="drawing">' + inner + "</svg>";
}

function drawPlot(c) {
    let out = "";
    // moving averages and candles
    let marks = "";
    c.candles.forEach(([top, bottom, high, low, kind], i) => {
        const x = c.first + c.step * i;
        const fill = kind === "g" ? GREEN : kind === "r" ? RED : "#ccc";
        const edge = kind === "r" ? "#f09aa2" : "#c8f8d0";
        marks += `<path d="M${x} ${high}V${low}" stroke="#999"/>`;
        marks += `<rect x="${x - c.width / 2}" y="${top}" width="${c.width}" height="${bottom - top}" fill="${fill}" stroke="${edge}" stroke-width=".6"/>`;
    });
    c.averages.forEach(([color, width, points]) => {
        marks += `<polyline points="${points}" fill="none" stroke="${color}" stroke-width="${width}"/>`;
    });
    c.levels.forEach(([label, y, color = OLIVE, from = 0]) => {
        out += `<line x1="${from}" x2="100%" y1="${y - c.y}" y2="${y - c.y}" stroke="${color}"/>`;
    });
    out += `<g transform="translate(${-c.x} ${-c.y})">${marks}</g>`;
    c.levels.forEach(([label, y, color, from = 0]) => {
        if (label) out += `<text x="${from + 2}" y="${y - c.y - 3}">${label}</text>`;
    });
    const [y, x] = c.last;
    out += `<line x1="${x}" x2="100%" y1="${y - c.y}" y2="${y - c.y}" stroke="#bbb" stroke-dasharray="3 2"/>`;
    document.getElementById("plot-" + c.id).insertAdjacentHTML("afterbegin", svg(out));
}

function drawPriceAxis(c) {
    let out = "";
    for (let i = 0; i < c.axisCount; i++) {
        const y = c.axisTop + c.axisStep * i - c.y + 3.5;
        const price = (c.priceTop - c.priceStep * i).toFixed(2);
        out += `<text class="axis-label" x="${c.axisX}" y="${y}">${price}</text>`;
    }
    c.tags.forEach(([label, y, back, fore]) => {
        out += `<rect x="${c.axisX - 2}" y="${y - c.y - 6}" width="45" height="12" fill="${back}"/>`;
        out += `<text class="axis-label" x="${c.axisX}" y="${y - c.y + 3.5}" style="fill:${fore}">${label}</text>`;
    });
    document.getElementById("price-" + c.id).innerHTML = svg(out);
}

function drawTimeAxis(c) {
    const out = c.times.map((t, i) =>
        `<text class="axis-label" x="${c.timeX + c.timeStep * i}" y="8" text-anchor="middle">${t}</text>`).join("");
    document.getElementById("time-" + c.id).innerHTML = svg(out);
}

[chart5m, chart1m].forEach((c) => {
    drawPlot(c);
    drawPriceAxis(c);
    drawTimeAxis(c);
});
```
